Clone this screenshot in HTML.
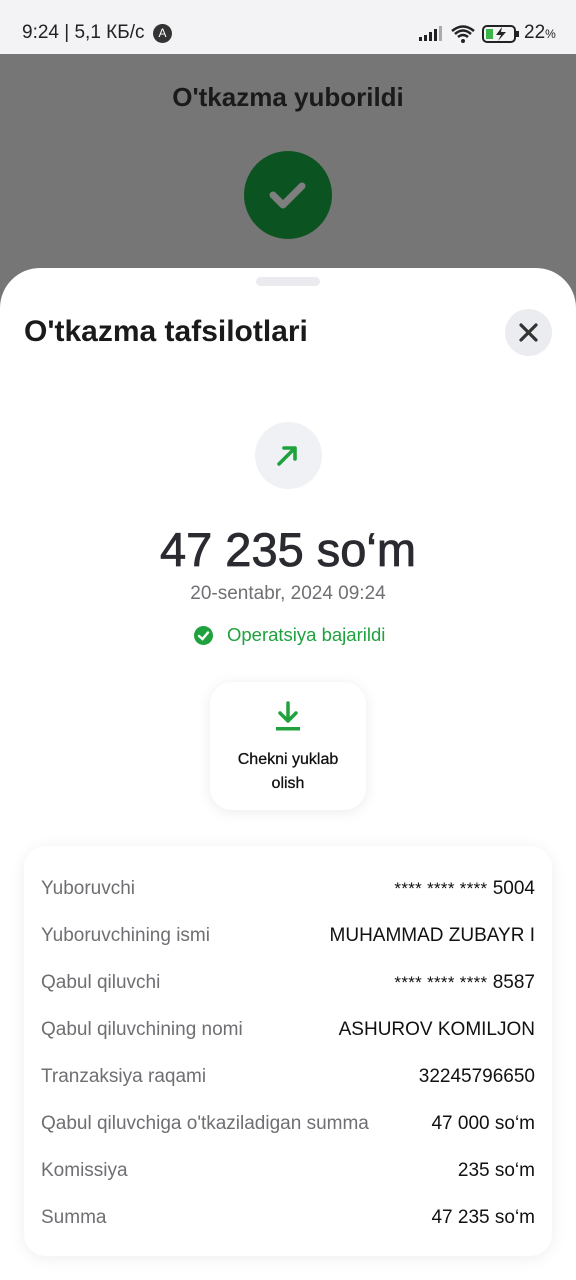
<!DOCTYPE html>
<html><head><meta charset="utf-8"><style>
*{margin:0;padding:0;box-sizing:border-box}
body{width:576px;height:1280px;overflow:hidden;background:#767676;font-family:"Liberation Sans",sans-serif;position:relative}
.status{position:absolute;top:0;left:0;width:576px;height:54px;background:#f3f3f6;color:#222;font-size:19px}
.abs{position:absolute}
.sheet{position:absolute;top:268px;left:0;width:576px;height:1012px;background:#fff;border-radius:40px 40px 0 0}
.row{position:absolute;left:41px;right:41px;height:30px;font-size:19px;display:flex;justify-content:space-between;align-items:center}
.row span:first-child{color:#6f6f73}
.row span:last-child{color:#111}
.st{font-size:17px;letter-spacing:0.3px}
</style></head><body>
<div class="status">
 <div class="abs" style="left:22px;top:22px;">9:24 | 5,1 КБ/с</div>
 <div class="abs" style="left:153px;top:24px;width:19px;height:19px;border-radius:50%;background:#333;color:#fff;font-size:12px;text-align:center;line-height:19px">A</div>
 <svg class="abs" style="left:418px;top:26px" width="26" height="16"><rect x="1" y="11" width="3" height="4" fill="#222"/><rect x="6" y="9" width="3" height="6" fill="#222"/><rect x="11" y="6" width="3" height="9" fill="#222"/><rect x="16" y="3" width="3" height="12" fill="#222"/><rect x="21" y="0" width="3" height="15" fill="#aaa"/></svg>
 <svg class="abs" style="left:450px;top:24px" width="26" height="20"><path d="M2 7 Q13 -2 24 7 M5 10 Q13 3 21 10 M8 13 Q13 9 18 13" stroke="#222" stroke-width="2.5" fill="none"/><circle cx="13" cy="17" r="2" fill="#222"/></svg>
 <svg class="abs" style="left:482px;top:25px" width="38" height="18"><rect x="1" y="1" width="32" height="16" rx="4" stroke="#222" stroke-width="2" fill="none"/><rect x="4" y="4" width="7" height="10" fill="#3bb44a"/><rect x="34" y="6" width="3" height="6" fill="#222"/><path d="M20 2 L14 10 L19 10 L16 16 L24 7 L19 7 Z" fill="#222"/></svg>
 <div class="abs" style="left:524px;top:22px">22<span style="font-size:12px">%</span></div>
</div>
<div class="abs" style="top:82px;width:576px;text-align:center;font-size:26px;font-weight:bold;color:#1a1a1a">O'tkazma yuborildi</div>
<div class="abs" style="left:244px;top:151px;width:88px;height:88px;border-radius:50%;background:#0b5321"></div>
<svg class="abs" style="left:266px;top:175px" width="44" height="40"><path d="M7 20 L17 30 L36 11" stroke="#7f7f7f" stroke-width="7" fill="none" stroke-linecap="round" stroke-linejoin="round"/></svg>
<div class="sheet">
 <div class="abs" style="left:256px;top:9px;width:64px;height:9px;border-radius:5px;background:#ebebef"></div>
 <div class="abs" style="left:24px;top:47px;font-size:30px;font-weight:bold;color:#1a1a1a">O'tkazma tafsilotlari</div>
 <div class="abs" style="left:505px;top:41px;width:47px;height:47px;border-radius:50%;background:#ebecf0"></div>
 <svg class="abs" style="left:518px;top:54px" width="21" height="21"><path d="M3 3 L18 18 M18 3 L3 18" stroke="#333" stroke-width="3.2" stroke-linecap="round"/></svg>
 <div class="abs" style="left:255px;top:154px;width:67px;height:67px;border-radius:50%;background:#f0f1f5"></div>
 <svg class="abs" style="left:274px;top:173px" width="28" height="28"><path d="M5 23 L21 7 M10 7 L21 7 L21 18" stroke="#1fa23d" stroke-width="3.6" fill="none" stroke-linecap="round" stroke-linejoin="round"/></svg>
 <div class="abs" style="top:254px;width:576px;text-align:center;font-size:47px;color:#2a2b30;-webkit-text-stroke:0.8px #2a2b30">47 235 so‘m</div>
 <div class="abs" style="top:315px;width:576px;text-align:center;font-size:19px;color:#707074">20-sentabr, 2024 09:24</div>
 <svg class="abs" style="left:194px;top:358px" width="19" height="19"><circle cx="9.5" cy="9.5" r="9.5" fill="#1fa23d"/><path d="M5 10 L8.5 13 L14 6.5" stroke="#fff" stroke-width="2.4" fill="none" stroke-linecap="round"/></svg>
 <div class="abs" style="left:227px;top:356px;font-size:18.5px;color:#1fa23d">Operatsiya bajarildi</div>
 <div class="abs" style="left:210px;top:414px;width:156px;height:128px;border-radius:22px;background:#fff;box-shadow:0 2px 14px rgba(0,0,0,0.08)"></div>
 <svg class="abs" style="left:274px;top:432px" width="28" height="34"><path d="M14 3 L14 20 M6 13 L14 21 L22 13" stroke="#1fa23d" stroke-width="3.5" fill="none" stroke-linecap="round" stroke-linejoin="round"/><rect x="2" y="27" width="24" height="3.5" fill="#1fa23d"/></svg>
 <div class="abs" style="left:210px;top:480px;width:156px;text-align:center;font-size:16px;line-height:24px;color:#111;-webkit-text-stroke:0.3px #111">Chekni yuklab<br>olish</div>
 <div class="abs" style="left:24px;top:578px;width:528px;height:410px;border-radius:22px;background:#fff;box-shadow:0 2px 16px rgba(0,0,0,0.07)"></div>
 <div class="row" style="top:606px"><span>Yuboruvchi</span><span><span class="st">**** **** ****</span> 5004</span></div>
 <div class="row" style="top:653px"><span>Yuboruvchining ismi</span><span>MUHAMMAD ZUBAYR I</span></div>
 <div class="row" style="top:700px"><span>Qabul qiluvchi</span><span><span class="st">**** **** ****</span> 8587</span></div>
 <div class="row" style="top:747px"><span>Qabul qiluvchining nomi</span><span>ASHUROV KOMILJON</span></div>
 <div class="row" style="top:794px"><span>Tranzaksiya raqami</span><span>32245796650</span></div>
 <div class="row" style="top:841px"><span>Qabul qiluvchiga o'tkaziladigan summa</span><span>47 000 so‘m</span></div>
 <div class="row" style="top:888px"><span>Komissiya</span><span>235 so‘m</span></div>
 <div class="row" style="top:935px"><span>Summa</span><span>47 235 so‘m</span></div>
</div>
</body></html>
